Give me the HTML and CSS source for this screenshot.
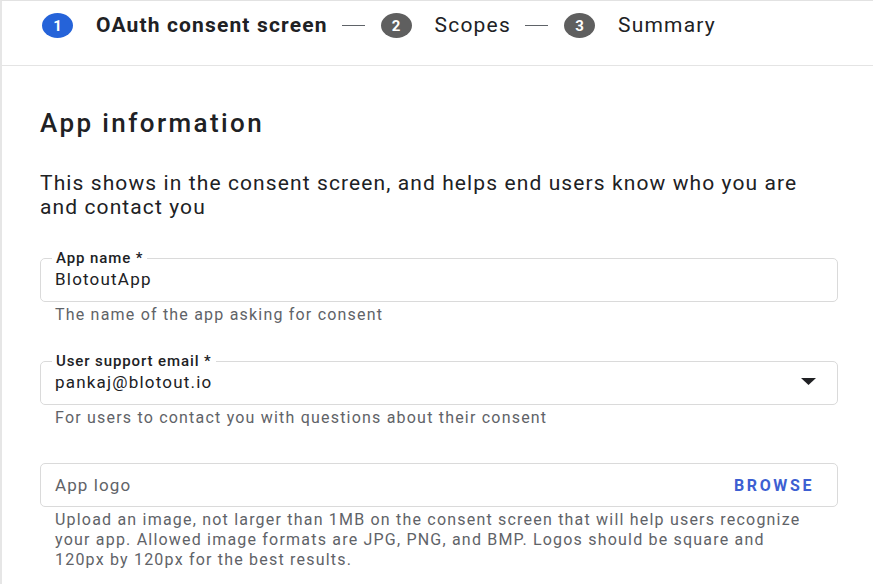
FILE: index.html
```html
<!DOCTYPE html>
<html lang="en">
<head>
<meta charset="utf-8">
<title>OAuth consent screen</title>
<link rel="stylesheet" href="styles.css">
</head>
<body>
<div class="page">
  <header class="stepper">
    <span class="step-num active">1</span>
    <span class="step-label current">OAuth consent screen</span>
    <span class="dash"></span>
    <span class="step-num">2</span>
    <span class="step-label">Scopes</span>
    <span class="dash"></span>
    <span class="step-num">3</span>
    <span class="step-label">Summary</span>
  </header>
  <main class="content">
    <h1 class="title">App information</h1>
    <p class="intro">This shows in the consent screen, and helps end users know who you are<br>and contact you</p>

    <fieldset class="field">
      <legend class="field-label">App name *</legend>
      <div class="field-value">BlotoutApp</div>
    </fieldset>
    <div class="helper">The name of the app asking for consent</div>

    <fieldset class="field field-2">
      <legend class="field-label">User support email *</legend>
      <div class="field-value select">
        <span>pankaj@blotout.io</span>
        <svg class="caret" width="15" height="7" viewBox="0 0 15 7"><path d="M0 0H15L7.5 7Z" fill="#202124"/></svg>
      </div>
    </fieldset>
    <div class="helper">For users to contact you with questions about their consent</div>

    <div class="file-box">
      <span class="placeholder">App logo</span>
      <span class="browse">BROWSE</span>
    </div>
    <div class="helper helper-multi">Upload an image, not larger than 1MB on the consent screen that will help users recognize<br>your app. Allowed image formats are JPG, PNG, and BMP. Logos should be square and<br>120px by 120px for the best results.</div>
  </main>
</div>
</body>
</html>
```
FILE: styles.css
```css
* { box-sizing: border-box; }
html, body { margin: 0; padding: 0; background: #fff; }
body {
  font-family: Roboto, "Liberation Sans", Arial, sans-serif;
  color: #202124;
  width: 873px;
  height: 584px;
  overflow: hidden;
}
.page {
  border-left: 2px solid #e6e6e6;
  border-top: 1px solid #e2e2e2;
  height: 584px;
}
.stepper {
  height: 65px;
  border-bottom: 1px solid #e4e4e4;
  display: flex;
  align-items: center;
  padding: 0 0 15px 40px;
}
.step-num {
  width: 31px;
  height: 25px;
  border-radius: 50%;
  background: #5f5f5f;
  color: #fff;
  font-size: 15px;
  font-weight: 700;
  display: flex;
  align-items: center;
  justify-content: center;
  flex: none;
}
.step-num.active { background: #2563d9; }
.step-label {
  font-size: 21px;
  line-height: 25px;
  letter-spacing: 1.2px;
  margin-left: 23px;
  color: #202124;
}
.step-label.current { font-weight: 700; letter-spacing: 1.15px; }
.dash {
  width: 23px;
  height: 1px;
  background: #5f6368;
  margin: 0 16px 0 14px;
  flex: none;
}
.content {
  padding: 42px 35px 0 38px;
}
.title {
  margin: 0;
  font-size: 26px;
  line-height: 30px;
  font-weight: 500;
  letter-spacing: 2.4px;
}
.intro {
  margin: 33px 0 0;
  font-size: 21px;
  line-height: 24px;
  letter-spacing: 1.1px;
}
.field {
  margin: 31px 0 0;
  padding: 2px 14px 12px;
  border: 1px solid #dadada;
  border-radius: 5px;
  min-width: 0;
}
.field-2 { margin-top: 28px; }
.field-label {
  padding: 0 4px;
  margin-left: -3px;
  font-size: 15px;
  line-height: 17px;
  font-weight: 500;
  letter-spacing: 0.9px;
}
.field-value {
  font-size: 17px;
  line-height: 20px;
  letter-spacing: 1.2px;
}
.select {
  display: flex;
  align-items: center;
  justify-content: space-between;
}
.caret { margin-right: 7px; margin-top: -2px; }
.helper {
  margin: 3px 0 0 15px;
  font-size: 16px;
  line-height: 20px;
  letter-spacing: 1.2px;
  color: #5f6368;
}
.file-box {
  margin-top: 35px;
  height: 44px;
  border: 1px solid #dadada;
  border-radius: 5px;
  display: flex;
  align-items: center;
  justify-content: space-between;
  padding: 0 23px 0 14px;
}
.placeholder {
  font-size: 17px;
  letter-spacing: 1.1px;
  color: #5f6368;
}
.browse {
  font-size: 16px;
  font-weight: 700;
  letter-spacing: 2.6px;
  color: #3d5fd2;
}
.helper-multi { margin-top: 3px; }
```
